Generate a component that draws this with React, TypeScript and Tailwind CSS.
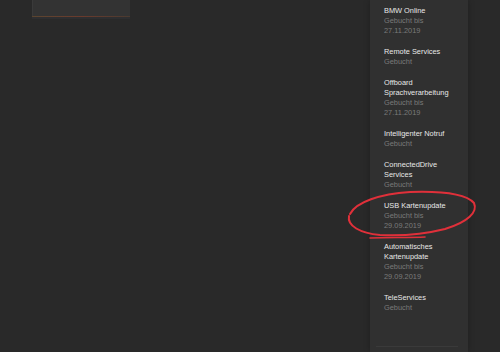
import React from "react";

const items: { title: string[]; sub: string[] }[] = [
  { title: ["BMW Online"], sub: ["Gebucht bis", "27.11.2019"] },
  { title: ["Remote Services"], sub: ["Gebucht"] },
  { title: ["Offboard", "Sprachverarbeitung"], sub: ["Gebucht bis", "27.11.2019"] },
  { title: ["Intelligenter Notruf"], sub: ["Gebucht"] },
  { title: ["ConnectedDrive", "Services"], sub: ["Gebucht"] },
  { title: ["USB Kartenupdate"], sub: ["Gebucht bis", "29.09.2019"] },
  { title: ["Automatisches", "Kartenupdate"], sub: ["Gebucht bis", "29.09.2019"] },
  { title: ["TeleServices"], sub: ["Gebucht"] },
];

export default function App() {
  return (
    <div
      className="relative w-[500px] h-[352px] overflow-hidden bg-[#292929] flex"
      style={{ fontFamily: '"Liberation Sans", Arial, sans-serif' }}
    >
      <div className="flex-1">
        <div className="ml-[32px] w-[98px] h-[16px] bg-[#333333] border-l border-[#3a3a3a]"></div>
        <div className="ml-[32px] w-[98px] h-[1px] bg-gradient-to-r from-[#5a4530] via-[#6a3a2c] to-[#4a3a30]"></div>
        <div className="ml-[32px] w-[98px] h-[2px] bg-[#2e2e30]"></div>
      </div>
      <div className="relative w-[98px] mr-[32px] h-full bg-[#303030] pl-[14px] pt-[6px] shadow-[0_0_6px_rgba(0,0,0,0.25)]">
        {items.map((it, i) => (
          <div key={i} className="mb-[11px] text-[7.4px] leading-[10px] whitespace-nowrap">
            {it.title.map((t, j) => (
              <div key={j} className="text-[#e8e8e8]">
                {t}
              </div>
            ))}
            {it.sub.map((t, j) => (
              <div key={j} className="text-[#7a7a7a]">
                {t}
              </div>
            ))}
          </div>
        ))}
        <div className="absolute left-[6px] right-[10px] bottom-[5px] h-[1px] bg-[#3a3a3a]"></div>
      </div>
      <svg
        className="absolute left-0 top-0 pointer-events-none"
        width="500"
        height="352"
        viewBox="0 0 500 352"
      >
        <path
          d="M 350 214 C 356 202, 380 194, 410 192 C 440 191, 466 194, 474 203 C 478 212, 468 222, 445 229 C 425 234, 400 236, 380 235 C 360 233, 347 226, 349 216"
          fill="none"
          stroke="#e0303a"
          strokeWidth="2"
          strokeLinecap="round"
        />
        <path
          d="M 370 238 C 390 237.5, 410 237.5, 425 237"
          fill="none"
          stroke="#e0303a"
          strokeWidth="1.6"
          strokeLinecap="round"
        />
      </svg>
    </div>
  );
}
